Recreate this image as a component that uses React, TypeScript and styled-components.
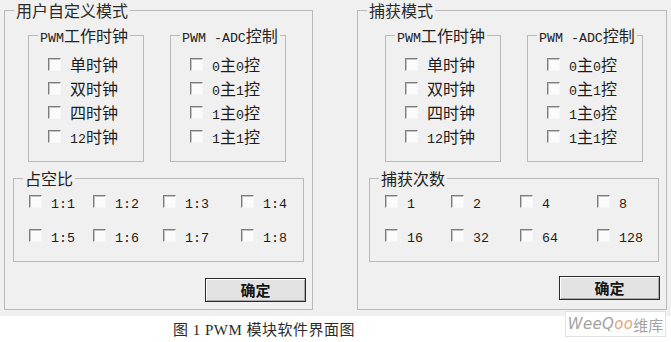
import React from 'react'
import styled, { createGlobalStyle } from 'styled-components'

const GlobalStyle = createGlobalStyle`
  html, body {
    margin: 0;
    padding: 0;
    background: #ffffff;
  }
  body {
    font-family: "Noto Sans CJK SC", "Liberation Sans", sans-serif;
    color: #1f1f1f;
  }
`

interface ChoiceGroupData {
  title: string
  columns: number[]
  items: string[]
}

interface PanelData {
  title: string
  width: number
  groupsInset: number
  gridInset: number
  buttonGap: number
  choice: ChoiceGroupData
}

const CLOCK = ['单时钟', '双时钟', '四时钟', '12时钟']
const ADC = ['0主0控', '0主1控', '1主0控', '1主1控']

const PANELS: PanelData[] = [
  {
    title: '用户自定义模式',
    width: 309,
    groupsInset: 23,
    gridInset: 8,
    buttonGap: 16,
    choice: {
      title: '占空比',
      columns: [64, 70, 78],
      items: ['1:1', '1:2', '1:3', '1:4', '1:5', '1:6', '1:7', '1:8']
    }
  },
  {
    title: '捕获模式',
    width: 310,
    groupsInset: 27,
    gridInset: 11,
    buttonGap: 14,
    choice: {
      title: '捕获次数',
      columns: [66, 69, 77],
      items: ['1', '2', '4', '8', '16', '32', '64', '128']
    }
  }
]

// splits latin runs out so they get the narrow half-width font
function Mixed({ text }: { text: string }) {
  const parts = text.split(/([\x20-\x7e]+)/).filter(Boolean)
  return (
    <>
      {parts.map((p, i) =>
        /^[\x20-\x7e]+$/.test(p) ? <Latin key={i}>{p}</Latin> : <span key={i}>{p}</span>
      )}
    </>
  )
}

function CheckItem({ label }: { label: string }) {
  return (
    <CheckRow>
      <Box />
      <CheckLabel>
        <Mixed text={label} />
      </CheckLabel>
    </CheckRow>
  )
}

function ListGroup({ title, items }: { title: string; items: string[] }) {
  return (
    <InnerBox>
      <InnerLegend>
        <Mixed text={title} />
      </InnerLegend>
      <ListBody>
        {items.map((c) => (
          <CheckItem key={c} label={c} />
        ))}
      </ListBody>
    </InnerBox>
  )
}

function Panel({ data }: { data: PanelData }) {
  return (
    <OuterBox $width={data.width}>
      <OuterLegend>{data.title}</OuterLegend>
      <GroupsRow $inset={data.groupsInset}>
        <ListGroup title="PWM工作时钟" items={CLOCK} />
        <ListGroup title="PWM -ADC控制" items={ADC} />
      </GroupsRow>
      <GridBox $inset={data.gridInset}>
        <GridLegend>{data.choice.title}</GridLegend>
        <ChoiceGrid $columns={data.choice.columns}>
          {data.choice.items.map((c) => (
            <CheckItem key={c} label={c} />
          ))}
        </ChoiceGrid>
      </GridBox>
      <ButtonRow $gap={data.buttonGap}>
        <OkButton type="button">确定</OkButton>
      </ButtonRow>
    </OuterBox>
  )
}

export default function App() {
  return (
    <>
      <GlobalStyle />
      <Page>
        <Dialog>
          {PANELS.map((p) => (
            <Panel key={p.title} data={p} />
          ))}
        </Dialog>
        <CaptionRow>
          <Caption>
            图 <SerifLatin>1 PWM</SerifLatin> 模块软件界面图
          </Caption>
        </CaptionRow>
        <Watermark>
          <WmLatin>
            WeeQ<WmAccent>oo</WmAccent>
          </WmLatin>
          维库
        </Watermark>
      </Page>
    </>
  )
}

const Page = styled.div`
  position: relative;
  width: 671px;
  height: 342px;
  overflow: hidden;
  background: #ffffff;
`

const Dialog = styled.div`
  display: flex;
  gap: 44px;
  height: 316px;
  padding-left: 4px;
  box-sizing: border-box;
  background: #f0f0f0;
`

const OuterBox = styled.fieldset<{ $width: number }>`
  width: ${({ $width }) => $width}px;
  height: 310px;
  box-sizing: border-box;
  margin: 0;
  padding: 0;
  min-width: 0;
  border: 1px solid #b9b9b9;
  display: flex;
  flex-direction: column;
`

const OuterLegend = styled.legend`
  margin-left: 9px;
  padding: 0 2px;
  height: 20px;
  font-size: 16px;
  line-height: 20px;
  color: #2a2a2a;
`

const GroupsRow = styled.div<{ $inset: number }>`
  display: flex;
  gap: 26px;
  padding: 6px 0 0 ${({ $inset }) => $inset}px;
`

const InnerBox = styled.fieldset`
  width: 116px;
  box-sizing: border-box;
  margin: 0;
  padding: 0;
  min-width: 0;
  border: 1px solid #b9b9b9;
`

const InnerLegend = styled.legend`
  margin-left: 9px;
  padding: 0 2px;
  height: 18px;
  font-size: 16px;
  line-height: 18px;
  color: #222;
  white-space: nowrap;
`

const ListBody = styled.div`
  padding: 8px 0 13px 19px;
`

const GridBox = styled.fieldset<{ $inset: number }>`
  width: ${({ $inset }) => ($inset > 8 ? 290 : 291)}px;
  box-sizing: border-box;
  margin: 6px 0 0 ${({ $inset }) => $inset}px;
  padding: 0;
  min-width: 0;
  border: 1px solid #b9b9b9;
`

const GridLegend = styled.legend`
  margin-left: 9px;
  padding: 0 2px;
  height: 20px;
  font-size: 16px;
  line-height: 20px;
  color: #222;
`

const ChoiceGrid = styled.div<{ $columns: number[] }>`
  display: grid;
  grid-template-columns: ${({ $columns }) => $columns.map((c) => `${c}px`).join(' ')} auto;
  row-gap: 10px;
  padding: 1px 0 14px 15px;
`

const CheckRow = styled.div`
  display: flex;
  align-items: center;
  height: 24px;
  gap: 9px;
`

const Box = styled.span`
  flex: none;
  width: 13px;
  height: 13px;
  box-sizing: border-box;
  background: #fbfbfb;
  border-top: 1px solid #7c7c7c;
  border-left: 1px solid #7c7c7c;
  border-right: 1px solid #f6f6f6;
  border-bottom: 1px solid #f6f6f6;
  box-shadow: inset 1px 1px 0 #c4c4c4;
`

const CheckLabel = styled.span`
  font-size: 16px;
  line-height: 20px;
  color: #1c1c1c;
  white-space: nowrap;
`

const Latin = styled.span`
  font-family: "Liberation Mono", monospace;
  font-size: 13.3px;
  line-height: 1;
  white-space: pre;
`

const ButtonRow = styled.div<{ $gap: number }>`
  display: flex;
  justify-content: flex-end;
  padding: ${({ $gap }) => $gap}px 6px 0 0;
`

const OkButton = styled.button`
  width: 101px;
  height: 24px;
  margin: 0;
  padding: 0;
  box-sizing: border-box;
  border: 1px solid #2b2b2b;
  background: #e3e3e3;
  box-shadow: inset 1px 1px 0 #ffffff, inset -1px -1px 0 #a8a8a8;
  font-family: "Noto Sans CJK SC", sans-serif;
  font-size: 15px;
  font-weight: 700;
  line-height: 20px;
  color: #151515;
`

const CaptionRow = styled.div`
  display: flex;
  padding: 3px 0 0 173px;
`

const Caption = styled.span`
  font-family: "Liberation Serif", "Noto Sans CJK SC", serif;
  font-size: 15px;
  line-height: 22px;
  color: #2a2a2a;
  letter-spacing: 0.5px;
`

const SerifLatin = styled.span`
  font-family: "Liberation Serif", serif;
`

const Watermark = styled.div`
  position: absolute;
  left: 565px;
  top: 311px;
  width: 101px;
  height: 26px;
  box-sizing: border-box;
  display: flex;
  align-items: center;
  justify-content: center;
  background: rgba(255, 255, 255, 0.92);
  border: 1px solid #e2e2e2;
  font-family: "Noto Sans CJK SC", sans-serif;
  font-size: 15px;
  color: #a3a3a3;
`

const WmLatin = styled.span`
  font-family: "DejaVu Sans", sans-serif;
  font-style: italic;
  font-size: 15px;
  letter-spacing: 0.3px;
`

const WmAccent = styled.span`
  color: #e9a27a;
`
